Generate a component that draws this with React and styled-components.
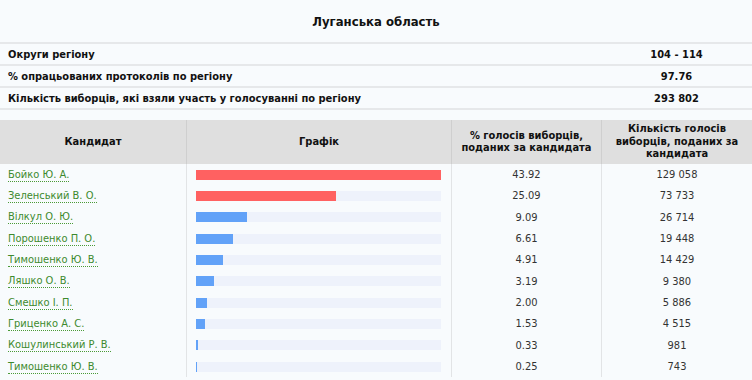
import React from "react";
import styled, { createGlobalStyle } from "styled-components";

const GlobalStyle = createGlobalStyle`
  body {
    margin: 0;
    background: #f8fbfd;
    font-family: "DejaVu Sans Condensed", "DejaVu Sans", Verdana, sans-serif;
    font-size: 11px;
    color: #333;
  }
`;

const info = [
  ["Округи регіону", "104 - 114"],
  ["% опрацьованих протоколів по регіону", "97.76"],
  ["Кількість виборців, які взяли участь у голосуванні по регіону", "293 802"],
];

const candidates = [
  ["Бойко Ю. А.", 43.92, "129 058"],
  ["Зеленський В. О.", 25.09, "73 733"],
  ["Вілкул О. Ю.", 9.09, "26 714"],
  ["Порошенко П. О.", 6.61, "19 448"],
  ["Тимошенко Ю. В.", 4.91, "14 429"],
  ["Ляшко О. В.", 3.19, "9 380"],
  ["Смешко І. П.", 2.0, "5 886"],
  ["Гриценко А. С.", 1.53, "4 515"],
  ["Кошулинський Р. В.", 0.33, "981"],
  ["Тимошенко Ю. В.", 0.25, "743"],
];

const cols = "186px 265px 150px 151px";

const Page = styled.div`
  width: 752px;
`;

const Title = styled.h2`
  margin: 0;
  height: 42px;
  display: flex;
  align-items: center;
  justify-content: center;
  font-size: 13px;
  font-weight: bold;
  color: #111;
`;

const InfoTable = styled.div`
  border-bottom: 2px solid #e6e8ea;
`;

const InfoRow = styled.div`
  display: grid;
  grid-template-columns: 601px 151px;
  height: 20px;
  align-items: center;
  border-top: 2px solid #e6e8ea;
  font-weight: bold;
  color: #111;
`;

const InfoLabel = styled.div`
  padding-left: 8px;
`;

const InfoValue = styled.div`
  text-align: center;
`;

const Results = styled.div`
  margin-top: 10px;
  display: grid;
  grid-template-columns: ${cols};
  grid-template-rows: 44px;
  grid-auto-rows: 21.33px;
`;

const Head = styled.div`
  background: #dfdfdf;
  border-left: ${(p) => (p.$first ? "none" : "1px solid #cfcfcf")};
  display: flex;
  align-items: center;
  justify-content: center;
  text-align: center;
  font-weight: bold;
  color: #111;
  line-height: 12.5px;
  padding: 0 8px;
`;

const Cell = styled.div`
  display: flex;
  align-items: center;
  justify-content: ${(p) => (p.$center ? "center" : "flex-start")};
  border-left: ${(p) => (p.$first ? "none" : "1px solid #e2e4e6")};
  padding-left: ${(p) => (p.$first ? "8px" : "0")};
`;

const Name = styled.a`
  color: #3d8a2e;
  text-decoration: none;
  border-bottom: 1px dotted #4a9a36;
  line-height: 13px;
`;

const BarCell = styled(Cell)`
  padding: 0 10px 0 9px;
`;

const Track = styled.div`
  width: 245px;
  height: 10px;
  background: #eef2fb;
`;

const Bar = styled.div`
  height: 100%;
  background: ${(p) => (p.$lead ? "#ff6161" : "#62a2f8")};
`;

export default function App() {
  const max = candidates[0][1];
  return (
    <Page>
      <GlobalStyle />
      <Title>Луганська область</Title>
      <InfoTable>
        {info.map(([label, value]) => (
          <InfoRow key={label}>
            <InfoLabel>{label}</InfoLabel>
            <InfoValue>{value}</InfoValue>
          </InfoRow>
        ))}
      </InfoTable>
      <Results>
        <Head $first>Кандидат</Head>
        <Head>Графік</Head>
        <Head>% голосів виборців, поданих за кандидата</Head>
        <Head>Кількість голосів виборців, поданих за кандидата</Head>
        {candidates.map(([name, pct, votes], i) => (
          <React.Fragment key={name + i}>
            <Cell $first>
              <Name href="#">{name}</Name>
            </Cell>
            <BarCell>
              <Track>
                <Bar $lead={i < 2} style={{ width: `${(pct / max) * 100}%` }} />
              </Track>
            </BarCell>
            <Cell $center>{pct.toFixed(2)}</Cell>
            <Cell $center>{votes}</Cell>
          </React.Fragment>
        ))}
      </Results>
    </Page>
  );
}
